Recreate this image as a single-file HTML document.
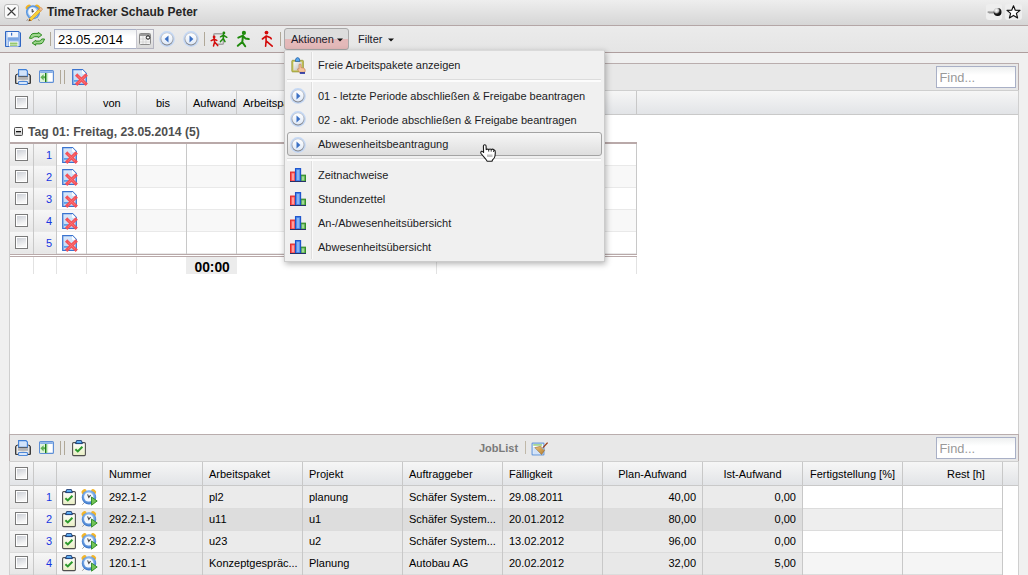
<!DOCTYPE html>
<html><head><meta charset="utf-8">
<style>
*{box-sizing:border-box;margin:0;padding:0}
html,body{width:1028px;height:575px;overflow:hidden;background:#f0f0f0;font-family:"Liberation Sans",sans-serif;font-size:11px;color:#000}
.a{position:absolute}
svg.a{overflow:visible}
#title{left:0;top:0;width:1028px;height:26px;background:linear-gradient(#eeeeee,#d6d6d6);border-bottom:1px solid #b4a6a6}
#tb{left:0;top:26px;width:1028px;height:27px;background:linear-gradient(#ebebeb,#e5e5e5);border-bottom:1px solid #ae9e9e}
.pbox{left:9px;width:1010px;border:1px solid #cfcfcf;border-top-color:#b9adad;background:#fff}
.pbr{left:9px;width:1010px;height:27px;border:1px solid #b9adad;border-bottom:0}
.ptb{left:10px;width:1008px;height:27px;background:#e8e8e8;border-bottom:1px solid #cfcfcf}
.hdr{left:10px;width:1008px;height:24px;background:linear-gradient(#f6f6f6,#e2e4e7);border-bottom:1px solid #c9c9c9}
.vl{width:1px;background:#c8c8c8}
.hl{height:1px;background:#e6e6e6}
.t{white-space:nowrap}
.cb{width:13px;height:13px;border:1px solid #7a7a7a;box-shadow:inset 0 0 0 1px #fff;background:linear-gradient(160deg,#c6cad2,#f6f6f6 75%)}
.find{width:80px;height:22px;border:1px solid #a9b0c6;background:linear-gradient(#eef0f0,#fff 40%);color:#999;padding:3px 0 0 2.5px;font-size:12.8px}
.num{color:#1636e2;text-align:right;width:20px}
.sep{width:1px;background:#b0a898}
.gcell{background:linear-gradient(#f7f7f7,#e7e7e7)}
</style></head><body>
<svg width="0" height="0" style="position:absolute">
 <defs>
  <linearGradient id="gBlue" x1="0" y1="0" x2="0" y2="1"><stop offset="0" stop-color="#d8e8fb"/><stop offset="1" stop-color="#9cc0ee"/></linearGradient>
 <linearGradient id="gPrn" x1="0" y1="0" x2="1" y2="0"><stop offset="0" stop-color="#8a8a8a"/><stop offset=".15" stop-color="#fafafa"/><stop offset=".5" stop-color="#d6d6d6"/><stop offset=".85" stop-color="#f4f4f4"/><stop offset="1" stop-color="#6a6a6a"/></linearGradient>
<linearGradient id="gExp" x1="0" y1="0" x2="1" y2="0"><stop offset="0" stop-color="#2a8a22"/><stop offset=".3" stop-color="#8fcf86"/><stop offset="1" stop-color="#fff" stop-opacity="0"/></linearGradient>
<linearGradient id="gRing" x1="0" y1="0" x2="0" y2="1"><stop offset="0" stop-color="#c9cfd8"/><stop offset="1" stop-color="#7d7f85"/></linearGradient>
<linearGradient id="gFace" x1="0" y1="0" x2="0" y2="1"><stop offset="0" stop-color="#ffffff"/><stop offset="1" stop-color="#dfe9f7"/></linearGradient>
<linearGradient id="gClip" x1="0" y1="0" x2="0" y2="1"><stop offset="0" stop-color="#ffffff"/><stop offset="1" stop-color="#e9efc4"/></linearGradient>
<linearGradient id="gClipT" x1="0" y1="0" x2="0" y2="1"><stop offset="0" stop-color="#8fd0ff"/><stop offset="1" stop-color="#2f8ee8"/></linearGradient>
<radialGradient id="gClk" cx=".5" cy=".4" r=".6"><stop offset=".5" stop-color="#8ab8ee"/><stop offset="1" stop-color="#2f6cc4"/></radialGradient>
</defs>
</svg>
<!-- ============ title bar ============ -->
<div id="title" class="a"></div>
<div class="a" style="left:4px;top:4px;width:15px;height:15px;border:1px solid #b9b9b9;border-radius:3px;background:#fafafa"></div>
<svg class="a" style="left:7px;top:7px" width="9" height="9"><path d="M0.5 0.5L8.5 8.5M8.5 0.5L0.5 8.5" stroke="#3a3a3a" stroke-width="1.1"/></svg>
<svg class="a" style="left:25px;top:4px" width="17" height="17" viewBox="0 0 17 17">
 <ellipse cx="3.3" cy="3" rx="3" ry="2" transform="rotate(-40 3.3 3)" fill="#f2b320"/>
 <ellipse cx="12.7" cy="3" rx="3" ry="2" transform="rotate(40 12.7 3)" fill="#f2b320"/>
 <path d="M3 15.5L1.5 16.5M13 15.5L14.5 16.5" stroke="#777" stroke-width=".8"/>
 <circle cx="8" cy="8.3" r="7" fill="#5b98e0"/><circle cx="8" cy="8.3" r="5.6" fill="#9cc4ef"/><circle cx="7.6" cy="7.8" r="4.4" fill="#f2f6fb"/>
 <path d="M7.2 5V8.2L9 6.8" fill="none" stroke="#333" stroke-width="1"/>
 <path d="M4.2 14.8L13.8 5.2L15.8 7.2L6.2 16.8Z" fill="#f6d23a" stroke="#d88a1a" stroke-width=".6"/>
 <path d="M13.8 5.2L15.4 3.6Q16.4 3.6 17 4.2Q17.4 5 17.4 5.6L15.8 7.2Z" fill="#efc09a" stroke="#c98040" stroke-width=".5"/>
 <path d="M4.2 14.8L3.4 17.2L6.2 16.8Z" fill="#7a4a1a"/>
</svg>
<div class="a t" style="left:47px;top:5px;font-weight:bold;font-size:12px;color:#262626">TimeTracker Schaub Peter</div>
<div class="a" style="left:986px;top:4px;width:16px;height:16px;border-radius:3px;background:#eeeeee"></div>
<svg class="a" style="left:986px;top:4px" width="16" height="16" viewBox="0 0 16 16">
 <radialGradient id="gPin" cx=".35" cy=".3" r=".75"><stop offset="0" stop-color="#fff"/><stop offset=".35" stop-color="#d0d0d0"/><stop offset=".6" stop-color="#222"/><stop offset="1" stop-color="#000"/></radialGradient>
 <path d="M1 8L3.2 6.9H9V9.4H3.2Z" fill="#9a9a9a"/><path d="M3.2 6.9H9V7.8H3.2Z" fill="#c8c8c8"/>
 <circle cx="11.6" cy="8" r="3.9" fill="url(#gPin)"/>
</svg>
<div class="a" style="left:1005px;top:4px;width:17px;height:16px;border-radius:3px;background:#eeeeee"></div>
<svg class="a" style="left:1006px;top:5px" width="15" height="14" viewBox="0 0 15 14">
 <path d="M7.5 0.8L9.3 5.2L14 5.4L10.4 8.4L11.6 13L7.5 10.4L3.4 13L4.6 8.4L1 5.4L5.7 5.2Z" fill="#fff" stroke="#111" stroke-width="1.15" stroke-linejoin="round"/>
</svg>
<!-- ============ toolbar ============ -->
<div id="tb" class="a"></div>
<svg class="a" style="left:5px;top:31px" width="16" height="16" viewBox="0 0 16 16">
 <path d="M0.5 0.5H14L15.5 2V15.5H0.5Z" fill="#8fb3ea" stroke="#2f66c2"/>
 <rect x="1.5" y="1" width="1.2" height="14" fill="#d8e6f8"/>
 <rect x="2.7" y="1" width="10.3" height="5.5" fill="#f2f6fc"/>
 <rect x="6" y="1.8" width="1.2" height="2.8" fill="#3a6fc8"/>
 <rect x="2.7" y="6.5" width="11" height="2.5" fill="#7aa4e2"/>
 <rect x="4" y="10.5" width="9.5" height="5" fill="#fff"/>
 <rect x="5" y="11.6" width="7.5" height="1.2" fill="#7cba4c"/><rect x="5" y="13.5" width="7.5" height="1.2" fill="#7cba4c"/>
</svg>
<svg class="a" style="left:29px;top:32px" width="16" height="14" viewBox="0 0 16 14">
 <path d="M0.5 6.3L1.6 3.6Q2.6 1.4 5 1.4H9.3V0.4L12.8 3L9.3 5.7V4.7H5.8Q4.2 4.7 3.3 6.3Z" fill="#9dd58c" stroke="#2a8a1e" stroke-width="1" stroke-linejoin="round"/>
 <path d="M15.5 7L14.4 9.7Q13.4 11.9 11 11.9H6.7V13.4L3.2 11L6.7 8.3V9.1H10.2Q11.8 9.1 12.7 7Z" fill="#9dd58c" stroke="#2a8a1e" stroke-width="1" stroke-linejoin="round"/>
</svg>
<div class="a sep" style="left:50px;top:32px;height:14px"></div>
<div class="a" style="left:54px;top:29px;width:84px;height:20px;border:1px solid #a9b0c6;border-right:0;background:linear-gradient(#eef0f2,#fff 35%)"></div>
<div class="a t" style="left:58px;top:32px;font-size:13px;color:#000">23.05.2014</div>
<div class="a" style="left:136px;top:29px;width:18px;height:20px;border:1px solid #b4b4c0;border-left:1px solid #c8c8d0;background:linear-gradient(#f6f6f6,#d9d9d9)"></div>
<svg class="a" style="left:139px;top:33px" width="12" height="12" viewBox="0 0 12 12">
 <rect x="0.5" y="0.5" width="11" height="11" rx="1" fill="#f3f3f3" stroke="#8a8a8a"/>
 <rect x="1" y="1" width="10" height="2" fill="#9a9a9a"/>
 <path d="M4 3V11M7 3V11M1 6H11M1 9H11" stroke="#cfcfcf" stroke-width=".8"/>
 <circle cx="9" cy="4.5" r="1.7" fill="#fff" stroke="#111" stroke-width="1"/>
</svg>
<svg class="a" style="left:159px;top:31px" width="16" height="16" viewBox="0 0 16 16"><g transform="translate(16,0) scale(-1,1)"><circle cx="8" cy="8" r="7.9" fill="#c4d8f5"/>
   <circle cx="8" cy="8" r="6.5" fill="url(#gRing)"/>
   <circle cx="8" cy="7.8" r="5.6" fill="url(#gFace)"/>
   <path d="M6.5 4.6L10.4 8L6.5 11.4Z" fill="#3b70c4"/></g></svg>
<svg class="a" style="left:183px;top:31px" width="16" height="16" viewBox="0 0 16 16"><circle cx="8" cy="8" r="7.9" fill="#c4d8f5"/>
   <circle cx="8" cy="8" r="6.5" fill="url(#gRing)"/>
   <circle cx="8" cy="7.8" r="5.6" fill="url(#gFace)"/>
   <path d="M6.5 4.6L10.4 8L6.5 11.4Z" fill="#3b70c4"/></svg>
<div class="a sep" style="left:204px;top:32px;height:14px"></div>
<svg class="a" style="left:210px;top:31px" width="18" height="16" viewBox="0 0 18 16">
 <rect x="3.8" y="2.7" width="9.6" height="10.6" rx="1" fill="none" stroke="#a3a3a3" stroke-width="1.5"/>
 <path d="M1.5 7.5L5 14.5M2 14V15" stroke="#e8e8e8" stroke-width="3"/>
 <path d="M9 6V11" stroke="#e8e8e8" stroke-width="4"/>
 <circle cx="4.1" cy="5.9" r="1.4" fill="#d40c0c"/>
 <path d="M1.2 9.6L4.2 8.2L6.8 9.4M4.2 7.4L4.6 11L3.5 15M4.6 11L7.7 14.6" fill="none" stroke="#d40c0c" stroke-width="1.5" stroke-linecap="round" stroke-linejoin="round"/>
 <circle cx="13.9" cy="1.9" r="1.4" fill="#1f8a0c"/>
 <path d="M10.5 5.8L13.4 4.2L16.8 6.3M13.5 3.5L13.3 7.6L10.5 10.6M13.3 7.6L15 10.6" fill="none" stroke="#1f8a0c" stroke-width="1.5" stroke-linecap="round" stroke-linejoin="round"/>
</svg>
<svg class="a" style="left:236px;top:31px" width="14" height="16" viewBox="0 0 14 16">
 <circle cx="7.9" cy="1.9" r="2.1" fill="#1f8a0c"/>
 <path d="M2.3 6.6L7 4.6L6.3 11L1.8 14.8M6.3 11L9.2 15.3M7.2 5.2L9.4 7.4L12.8 8" fill="none" stroke="#1f8a0c" stroke-width="2" stroke-linecap="round" stroke-linejoin="round"/>
</svg>
<svg class="a" style="left:261px;top:31px" width="14" height="16" viewBox="0 0 14 16">
 <circle cx="5.5" cy="1.6" r="1.9" fill="#d30a0a"/>
 <path d="M1.4 8L5 5.2L5.1 9.8L4.6 15.2M5.1 9.8L11.2 15.2M5.3 5L9.5 6.8L10.2 7.8" fill="none" stroke="#d30a0a" stroke-width="1.6" stroke-linecap="round" stroke-linejoin="round"/>
</svg>
<div class="a sep" style="left:280px;top:32px;height:14px"></div>
<div class="a" style="left:284px;top:28px;width:65px;height:22px;border:1px solid #a9a9a9;border-radius:3px;background:linear-gradient(#dddddd 50%,#e4b9b9 50%)"></div>
<div class="a t" style="left:291px;top:33px;color:#1a1a2a">Aktionen</div>
<svg class="a" style="left:337px;top:38px" width="6" height="4"><path d="M0 0.5H6L3 3.5Z" fill="#111"/></svg>
<div class="a t" style="left:358px;top:33px;color:#1a1a2a">Filter</div>
<svg class="a" style="left:388px;top:38px" width="6" height="4"><path d="M0 0.5H6L3 3.5Z" fill="#111"/></svg>
<!-- ============ top panel ============ -->
<div class="a pbox" style="top:63px;height:372px"></div>
<div class="a ptb" style="top:64px"></div>
<div class="a pbr" style="top:63px"></div>
<svg class="a" style="left:15px;top:69px" width="16" height="16" viewBox="0 0 16 16"><path d="M0.6 7Q0.6 5.2 2.4 5.2H13.6Q15.4 5.2 15.4 7V14.4H0.6Z" fill="url(#gPrn)" stroke="#2e2e2e" stroke-width="1"/>
   <rect x="3" y="8.2" width="10" height="2.6" fill="#b4b4b4"/>
   <path d="M3.6 0.6H11L12.4 2V7.4H3.6Z" fill="#d3e4fa" stroke="#3f7fd6" stroke-width="1.1"/>
   <path d="M3.6 7.6H12.4" stroke="#5a5a5a" stroke-width="1"/>
   <path d="M3.6 12.6H12.4V15.4H3.6Z" fill="#eaf2fd" stroke="#3f7fd6" stroke-width="1"/></svg>
<svg class="a" style="left:39px;top:70px" width="15" height="13" viewBox="0 0 15 13"><rect x="0.6" y="0.6" width="13.8" height="11.8" rx="1" fill="#fff" stroke="#5e8fd6" stroke-width="1.2"/>
   <rect x="1.2" y="1.2" width="12.6" height="1.8" fill="#86aee8"/>
   <rect x="1.2" y="3" width="5.3" height="9" fill="#dff3da"/>
   <rect x="6.3" y="3" width="4" height="9" fill="url(#gExp)"/>
   <path d="M1.4 7.3L4.6 4.2V6.3H6V8.3H4.6V10.4Z" fill="#5fb055"/>
   <rect x="6" y="3" width="1.1" height="9" fill="#1f7a1a"/></svg>
<div class="a sep" style="left:60px;top:70px;height:14px"></div>
<div class="a sep" style="left:64px;top:70px;height:14px"></div>
<svg class="a" style="left:72px;top:69px" width="16" height="16" viewBox="0 0 16 16"><path d="M0.7 0.7H10.5L14.3 4.5V15.5H0.7Z" fill="url(#gBlue)" stroke="#3a73cf" stroke-width="1.2"/>
   <path d="M2 2H10V5H13V14H2Z" fill="#d9e8fa" opacity=".6"/>
   <path d="M10.5 1V4.5H14" fill="#fff" stroke="#fff" stroke-width=".8"/>
   <rect x="2" y="11" width="6" height="1.8" fill="#5aa0e8"/>
   <path d="M5.3 6.6L13.6 14.6M13.6 6.6L5.3 14.6" stroke="#f5535a" stroke-width="3.3" stroke-linecap="square"/>
   <path d="M6 7.3L13 14M13 7.3L6 14" stroke="#ff8a8a" stroke-width=".9" opacity=".6"/></svg>
<div class="a find" style="left:936px;top:66px">Find...</div>
<div class="a hdr" style="top:91px"></div>
<div class="a cb" style="left:15px;top:96px"></div>
<div class="a vl" style="left:33px;top:91px;height:23px"></div>
<div class="a vl" style="left:56px;top:91px;height:23px"></div>
<div class="a vl" style="left:86px;top:91px;height:23px"></div>
<div class="a vl" style="left:136px;top:91px;height:23px"></div>
<div class="a vl" style="left:186px;top:91px;height:23px"></div>
<div class="a vl" style="left:236px;top:91px;height:23px"></div>
<div class="a vl" style="left:436px;top:91px;height:23px"></div>
<div class="a vl" style="left:636px;top:91px;height:23px"></div>
<div class="a t" style="left:103px;top:97px">von</div>
<div class="a t" style="left:156px;top:97px">bis</div>
<div class="a t" style="left:193px;top:97px">Aufwand</div>
<div class="a t" style="left:243px;top:97px">Arbeitspaket</div>
<!-- group header -->
<svg class="a" style="left:14px;top:127px" width="9" height="9" viewBox="0 0 9 9"><linearGradient id="gMin" x1="0" y1="0" x2="0" y2="1"><stop offset="0" stop-color="#fafafa"/><stop offset="1" stop-color="#cfcfcf"/></linearGradient><rect x=".5" y=".5" width="8" height="8" rx="1" fill="url(#gMin)" stroke="#4a4a4a"/><rect x="2" y="4" width="5" height="1.3" fill="#111"/></svg>
<div class="a t" style="left:28px;top:125px;font-weight:bold;font-size:12.2px;color:#4f4f4f">Tag 01: Freitag, 23.05.2014 (5)</div>
<div class="a" style="left:10px;top:142px;width:627px;height:2px;background:#b9a9a9"></div>
<!--ROWS_TOP-->
<div class="a gcell" style="left:10px;top:144px;width:46px;height:21px"></div>
<div class="a cb" style="left:15px;top:148px"></div>
<div class="a t num" style="left:32px;top:149px;">1</div>
<svg class="a" style="left:62px;top:147px" width="16" height="16" viewBox="0 0 16 16"><path d="M0.7 0.7H10.5L14.3 4.5V15.5H0.7Z" fill="url(#gBlue)" stroke="#3a73cf" stroke-width="1.2"/>
   <path d="M2 2H10V5H13V14H2Z" fill="#d9e8fa" opacity=".6"/>
   <path d="M10.5 1V4.5H14" fill="#fff" stroke="#fff" stroke-width=".8"/>
   <rect x="2" y="11" width="6" height="1.8" fill="#5aa0e8"/>
   <path d="M5.3 6.6L13.6 14.6M13.6 6.6L5.3 14.6" stroke="#f5535a" stroke-width="3.3" stroke-linecap="square"/>
   <path d="M6 7.3L13 14M13 7.3L6 14" stroke="#ff8a8a" stroke-width=".9" opacity=".6"/></svg>
<div class="a hl" style="left:10px;top:165px;width:627px;background:#e9e9e9"></div>
<div class="a gcell" style="left:10px;top:166px;width:46px;height:21px"></div>
<div class="a" style="left:57px;top:166px;width:580px;height:21px;background:#f8f8f8"></div>
<div class="a cb" style="left:15px;top:170px"></div>
<div class="a t num" style="left:32px;top:171px;">2</div>
<svg class="a" style="left:62px;top:169px" width="16" height="16" viewBox="0 0 16 16"><path d="M0.7 0.7H10.5L14.3 4.5V15.5H0.7Z" fill="url(#gBlue)" stroke="#3a73cf" stroke-width="1.2"/>
   <path d="M2 2H10V5H13V14H2Z" fill="#d9e8fa" opacity=".6"/>
   <path d="M10.5 1V4.5H14" fill="#fff" stroke="#fff" stroke-width=".8"/>
   <rect x="2" y="11" width="6" height="1.8" fill="#5aa0e8"/>
   <path d="M5.3 6.6L13.6 14.6M13.6 6.6L5.3 14.6" stroke="#f5535a" stroke-width="3.3" stroke-linecap="square"/>
   <path d="M6 7.3L13 14M13 7.3L6 14" stroke="#ff8a8a" stroke-width=".9" opacity=".6"/></svg>
<div class="a hl" style="left:10px;top:187px;width:627px;background:#e9e9e9"></div>
<div class="a gcell" style="left:10px;top:188px;width:46px;height:21px"></div>
<div class="a cb" style="left:15px;top:192px"></div>
<div class="a t num" style="left:32px;top:193px;">3</div>
<svg class="a" style="left:62px;top:191px" width="16" height="16" viewBox="0 0 16 16"><path d="M0.7 0.7H10.5L14.3 4.5V15.5H0.7Z" fill="url(#gBlue)" stroke="#3a73cf" stroke-width="1.2"/>
   <path d="M2 2H10V5H13V14H2Z" fill="#d9e8fa" opacity=".6"/>
   <path d="M10.5 1V4.5H14" fill="#fff" stroke="#fff" stroke-width=".8"/>
   <rect x="2" y="11" width="6" height="1.8" fill="#5aa0e8"/>
   <path d="M5.3 6.6L13.6 14.6M13.6 6.6L5.3 14.6" stroke="#f5535a" stroke-width="3.3" stroke-linecap="square"/>
   <path d="M6 7.3L13 14M13 7.3L6 14" stroke="#ff8a8a" stroke-width=".9" opacity=".6"/></svg>
<div class="a hl" style="left:10px;top:209px;width:627px;background:#e9e9e9"></div>
<div class="a gcell" style="left:10px;top:210px;width:46px;height:21px"></div>
<div class="a" style="left:57px;top:210px;width:580px;height:21px;background:#f8f8f8"></div>
<div class="a cb" style="left:15px;top:214px"></div>
<div class="a t num" style="left:32px;top:215px;">4</div>
<svg class="a" style="left:62px;top:213px" width="16" height="16" viewBox="0 0 16 16"><path d="M0.7 0.7H10.5L14.3 4.5V15.5H0.7Z" fill="url(#gBlue)" stroke="#3a73cf" stroke-width="1.2"/>
   <path d="M2 2H10V5H13V14H2Z" fill="#d9e8fa" opacity=".6"/>
   <path d="M10.5 1V4.5H14" fill="#fff" stroke="#fff" stroke-width=".8"/>
   <rect x="2" y="11" width="6" height="1.8" fill="#5aa0e8"/>
   <path d="M5.3 6.6L13.6 14.6M13.6 6.6L5.3 14.6" stroke="#f5535a" stroke-width="3.3" stroke-linecap="square"/>
   <path d="M6 7.3L13 14M13 7.3L6 14" stroke="#ff8a8a" stroke-width=".9" opacity=".6"/></svg>
<div class="a hl" style="left:10px;top:231px;width:627px;background:#e9e9e9"></div>
<div class="a gcell" style="left:10px;top:232px;width:46px;height:21px"></div>
<div class="a cb" style="left:15px;top:236px"></div>
<div class="a t num" style="left:32px;top:237px;">5</div>
<svg class="a" style="left:62px;top:235px" width="16" height="16" viewBox="0 0 16 16"><path d="M0.7 0.7H10.5L14.3 4.5V15.5H0.7Z" fill="url(#gBlue)" stroke="#3a73cf" stroke-width="1.2"/>
   <path d="M2 2H10V5H13V14H2Z" fill="#d9e8fa" opacity=".6"/>
   <path d="M10.5 1V4.5H14" fill="#fff" stroke="#fff" stroke-width=".8"/>
   <rect x="2" y="11" width="6" height="1.8" fill="#5aa0e8"/>
   <path d="M5.3 6.6L13.6 14.6M13.6 6.6L5.3 14.6" stroke="#f5535a" stroke-width="3.3" stroke-linecap="square"/>
   <path d="M6 7.3L13 14M13 7.3L6 14" stroke="#ff8a8a" stroke-width=".9" opacity=".6"/></svg>
<div class="a hl" style="left:10px;top:253px;width:627px;background:#e9e9e9"></div>
<div class="a vl" style="left:33px;top:144px;height:110px"></div>
<div class="a vl" style="left:56px;top:144px;height:110px"></div>
<div class="a vl" style="left:86px;top:144px;height:110px"></div>
<div class="a vl" style="left:136px;top:144px;height:110px"></div>
<div class="a vl" style="left:186px;top:144px;height:110px"></div>
<div class="a vl" style="left:236px;top:144px;height:110px"></div>
<div class="a vl" style="left:436px;top:144px;height:110px"></div>
<div class="a vl" style="left:636px;top:144px;height:110px"></div>
<div class="a" style="left:10px;top:254px;width:627px;height:1px;background:#b9a9a9"></div>
<div class="a" style="left:10px;top:256px;width:627px;height:1px;background:#b9a9a9"></div>
<div class="a" style="left:33px;top:257px;width:1px;height:17px;background:#e2e2e2"></div>
<div class="a" style="left:56px;top:257px;width:1px;height:17px;background:#e2e2e2"></div>
<div class="a" style="left:86px;top:257px;width:1px;height:17px;background:#e2e2e2"></div>
<div class="a" style="left:136px;top:257px;width:1px;height:17px;background:#e2e2e2"></div>
<div class="a" style="left:436px;top:257px;width:1px;height:17px;background:#e2e2e2"></div>
<div class="a" style="left:636px;top:257px;width:1px;height:17px;background:#e2e2e2"></div>
<div class="a" style="left:186px;top:257px;width:51px;height:17px;background:#ececec"></div>
<div class="a t" style="left:194.5px;top:260px;font-weight:bold;font-size:13.8px">00:00</div>
<!--/ROWS_TOP-->
<!--BOTTOM-->
<div class="a pbox" style="top:434px;height:150px"></div>
<div class="a ptb" style="top:435px"></div>
<div class="a pbr" style="top:434px"></div>
<svg class="a" style="left:15px;top:440px" width="16" height="16" viewBox="0 0 16 16"><path d="M0.6 7Q0.6 5.2 2.4 5.2H13.6Q15.4 5.2 15.4 7V14.4H0.6Z" fill="url(#gPrn)" stroke="#2e2e2e" stroke-width="1"/>
   <rect x="3" y="8.2" width="10" height="2.6" fill="#b4b4b4"/>
   <path d="M3.6 0.6H11L12.4 2V7.4H3.6Z" fill="#d3e4fa" stroke="#3f7fd6" stroke-width="1.1"/>
   <path d="M3.6 7.6H12.4" stroke="#5a5a5a" stroke-width="1"/>
   <path d="M3.6 12.6H12.4V15.4H3.6Z" fill="#eaf2fd" stroke="#3f7fd6" stroke-width="1"/></svg>
<svg class="a" style="left:39px;top:441px" width="15" height="13" viewBox="0 0 15 13"><rect x="0.6" y="0.6" width="13.8" height="11.8" rx="1" fill="#fff" stroke="#5e8fd6" stroke-width="1.2"/>
   <rect x="1.2" y="1.2" width="12.6" height="1.8" fill="#86aee8"/>
   <rect x="1.2" y="3" width="5.3" height="9" fill="#dff3da"/>
   <rect x="6.3" y="3" width="4" height="9" fill="url(#gExp)"/>
   <path d="M1.4 7.3L4.6 4.2V6.3H6V8.3H4.6V10.4Z" fill="#5fb055"/>
   <rect x="6" y="3" width="1.1" height="9" fill="#1f7a1a"/></svg>
<div class="a sep" style="left:60px;top:441px;height:14px"></div>
<div class="a sep" style="left:64px;top:441px;height:14px"></div>
<svg class="a" style="left:71px;top:440px" width="16" height="16" viewBox="0 0 16 16"><rect x="1.6" y="2.6" width="12.8" height="13" rx="1" fill="url(#gClip)" stroke="#505050" stroke-width="1.1"/>
   <path d="M4.6 3.6L5.6 0.6H10.4L11.4 3.6Z" fill="url(#gClipT)" stroke="#12306a" stroke-width=".9" stroke-linejoin="round"/>
   <path d="M4.4 9.2L6.8 11.4L11.4 6.8" fill="none" stroke="#2c9a2c" stroke-width="2"/></svg>
<div class="a t" style="left:479px;top:442px;font-weight:bold;font-size:11px;color:#7a7a7a">JobList</div>
<div class="a sep" style="left:525px;top:441px;height:13px;background:#c0b8a8"></div>
<svg class="a" style="left:531px;top:441px" width="18" height="16" viewBox="0 0 18 16">
 <linearGradient id="gBroom" x1="0" y1="0" x2="1" y2="1"><stop offset="0" stop-color="#f0c878"/><stop offset="1" stop-color="#b07a30"/></linearGradient>
 <rect x="1.1" y="2.1" width="11.8" height="11.8" rx=".6" fill="#fff" stroke="#6a9bdc" stroke-width="1.2"/>
 <rect x="2.2" y="3.4" width="9" height="1.1" fill="#6cbc50"/>
 <rect x="2.2" y="6" width="9.6" height="7.2" fill="#d2e2f7"/>
 <path d="M3.8 6.6L9.6 5.2L13.6 9.2L10.6 13.6Z" fill="url(#gBroom)" stroke="#8a5a20" stroke-width=".5"/>
 <path d="M10.2 5.8L13 8.6" stroke="#a8b8d8" stroke-width="1"/>
 <path d="M12 6.6L16.6 1.6" stroke="#9a3a14" stroke-width="1.3"/>
</svg>
<div class="a find" style="left:936px;top:437px">Find...</div>
<div class="a hdr" style="top:462px"></div>
<div class="a cb" style="left:15px;top:467px"></div>
<div class="a vl" style="left:33px;top:462px;height:23px"></div>
<div class="a vl" style="left:56px;top:462px;height:23px"></div>
<div class="a vl" style="left:102px;top:462px;height:23px"></div>
<div class="a vl" style="left:202px;top:462px;height:23px"></div>
<div class="a vl" style="left:302px;top:462px;height:23px"></div>
<div class="a vl" style="left:402px;top:462px;height:23px"></div>
<div class="a vl" style="left:502px;top:462px;height:23px"></div>
<div class="a vl" style="left:602px;top:462px;height:23px"></div>
<div class="a vl" style="left:702px;top:462px;height:23px"></div>
<div class="a vl" style="left:802px;top:462px;height:23px"></div>
<div class="a vl" style="left:902px;top:462px;height:23px"></div>
<div class="a vl" style="left:1002px;top:462px;height:23px"></div>
<div class="a t" style="left:109px;top:468px">Nummer</div>
<div class="a t" style="left:209px;top:468px">Arbeitspaket</div>
<div class="a t" style="left:309px;top:468px">Projekt</div>
<div class="a t" style="left:409px;top:468px">Auftraggeber</div>
<div class="a t" style="left:509px;top:468px">Fälligkeit</div>
<div class="a t" style="left:603px;top:468px;width:99px;text-align:center">Plan-Aufwand</div>
<div class="a t" style="left:703px;top:468px;width:99px;text-align:center">Ist-Aufwand</div>
<div class="a t" style="left:803px;top:468px;width:99px;text-align:center">Fertigstellung [%]</div>
<div class="a t" style="left:947px;top:468px">Rest [h]</div>
<div class="a gcell" style="left:10px;top:486px;width:46px;height:22px"></div>
<div class="a" style="left:57px;top:486px;width:45px;height:22px;background:#ffffff"></div>
<div class="a" style="left:103px;top:486px;width:699px;height:22px;background:#ebebeb"></div>
<div class="a" style="left:803px;top:486px;width:199px;height:22px;background:#ffffff"></div>
<div class="a cb" style="left:15px;top:490px"></div>
<div class="a t num" style="left:32px;top:491px;">1</div>
<svg class="a" style="left:61px;top:489px" width="16" height="16" viewBox="0 0 16 16"><rect x="1.6" y="2.6" width="12.8" height="13" rx="1" fill="url(#gClip)" stroke="#505050" stroke-width="1.1"/>
   <path d="M4.6 3.6L5.6 0.6H10.4L11.4 3.6Z" fill="url(#gClipT)" stroke="#12306a" stroke-width=".9" stroke-linejoin="round"/>
   <path d="M4.4 9.2L6.8 11.4L11.4 6.8" fill="none" stroke="#2c9a2c" stroke-width="2"/></svg>
<svg class="a" style="left:80px;top:488px" width="18" height="18" viewBox="0 0 18 18"><ellipse cx="4" cy="3.6" rx="2.9" ry="2" transform="rotate(-42 4 3.6)" fill="#f2b52a"/>
   <ellipse cx="13.6" cy="3.6" rx="2.9" ry="2" transform="rotate(42 13.6 3.6)" fill="#f2b52a"/>
   <path d="M3.8 15.2L2.4 16.6" stroke="#8a8a8a" stroke-width="1"/>
   <circle cx="9" cy="9.4" r="7.2" fill="url(#gClk)"/>
   <circle cx="8.7" cy="9" r="4.6" fill="#f4f8fd"/>
   <path d="M7.6 6.4L8.8 9.4L10.6 7.2" fill="none" stroke="#4a4a4a" stroke-width="1.1"/>
   <path d="M11.5 9L17.2 13L11.5 17.2Z" fill="#72c458" stroke="#2f8a22" stroke-width=".9" stroke-linejoin="round"/></svg>
<div class="a t" style="left:109px;top:491px">292.1-2</div>
<div class="a t" style="left:209px;top:491px">pl2</div>
<div class="a t" style="left:309px;top:491px">planung</div>
<div class="a t" style="left:409px;top:491px">Schäfer System...</div>
<div class="a t" style="left:509px;top:491px">29.08.2011</div>
<div class="a t" style="left:603px;top:491px;width:93px;text-align:right">40,00</div>
<div class="a t" style="left:703px;top:491px;width:93px;text-align:right">0,00</div>
<div class="a gcell" style="left:10px;top:508px;width:46px;height:22px"></div>
<div class="a" style="left:57px;top:508px;width:45px;height:22px;background:#eeeeee"></div>
<div class="a" style="left:103px;top:508px;width:699px;height:22px;background:#dddddd"></div>
<div class="a" style="left:803px;top:508px;width:199px;height:22px;background:#eeeeee"></div>
<div class="a cb" style="left:15px;top:512px"></div>
<div class="a t num" style="left:32px;top:513px;">2</div>
<svg class="a" style="left:61px;top:511px" width="16" height="16" viewBox="0 0 16 16"><rect x="1.6" y="2.6" width="12.8" height="13" rx="1" fill="url(#gClip)" stroke="#505050" stroke-width="1.1"/>
   <path d="M4.6 3.6L5.6 0.6H10.4L11.4 3.6Z" fill="url(#gClipT)" stroke="#12306a" stroke-width=".9" stroke-linejoin="round"/>
   <path d="M4.4 9.2L6.8 11.4L11.4 6.8" fill="none" stroke="#2c9a2c" stroke-width="2"/></svg>
<svg class="a" style="left:80px;top:510px" width="18" height="18" viewBox="0 0 18 18"><ellipse cx="4" cy="3.6" rx="2.9" ry="2" transform="rotate(-42 4 3.6)" fill="#f2b52a"/>
   <ellipse cx="13.6" cy="3.6" rx="2.9" ry="2" transform="rotate(42 13.6 3.6)" fill="#f2b52a"/>
   <path d="M3.8 15.2L2.4 16.6" stroke="#8a8a8a" stroke-width="1"/>
   <circle cx="9" cy="9.4" r="7.2" fill="url(#gClk)"/>
   <circle cx="8.7" cy="9" r="4.6" fill="#f4f8fd"/>
   <path d="M7.6 6.4L8.8 9.4L10.6 7.2" fill="none" stroke="#4a4a4a" stroke-width="1.1"/>
   <path d="M11.5 9L17.2 13L11.5 17.2Z" fill="#72c458" stroke="#2f8a22" stroke-width=".9" stroke-linejoin="round"/></svg>
<div class="a t" style="left:109px;top:513px">292.2.1-1</div>
<div class="a t" style="left:209px;top:513px">u11</div>
<div class="a t" style="left:309px;top:513px">u1</div>
<div class="a t" style="left:409px;top:513px">Schäfer System...</div>
<div class="a t" style="left:509px;top:513px">20.01.2012</div>
<div class="a t" style="left:603px;top:513px;width:93px;text-align:right">80,00</div>
<div class="a t" style="left:703px;top:513px;width:93px;text-align:right">0,00</div>
<div class="a gcell" style="left:10px;top:530px;width:46px;height:22px"></div>
<div class="a" style="left:57px;top:530px;width:45px;height:22px;background:#ffffff"></div>
<div class="a" style="left:103px;top:530px;width:699px;height:22px;background:#ebebeb"></div>
<div class="a" style="left:803px;top:530px;width:199px;height:22px;background:#ffffff"></div>
<div class="a cb" style="left:15px;top:534px"></div>
<div class="a t num" style="left:32px;top:535px;">3</div>
<svg class="a" style="left:61px;top:533px" width="16" height="16" viewBox="0 0 16 16"><rect x="1.6" y="2.6" width="12.8" height="13" rx="1" fill="url(#gClip)" stroke="#505050" stroke-width="1.1"/>
   <path d="M4.6 3.6L5.6 0.6H10.4L11.4 3.6Z" fill="url(#gClipT)" stroke="#12306a" stroke-width=".9" stroke-linejoin="round"/>
   <path d="M4.4 9.2L6.8 11.4L11.4 6.8" fill="none" stroke="#2c9a2c" stroke-width="2"/></svg>
<svg class="a" style="left:80px;top:532px" width="18" height="18" viewBox="0 0 18 18"><ellipse cx="4" cy="3.6" rx="2.9" ry="2" transform="rotate(-42 4 3.6)" fill="#f2b52a"/>
   <ellipse cx="13.6" cy="3.6" rx="2.9" ry="2" transform="rotate(42 13.6 3.6)" fill="#f2b52a"/>
   <path d="M3.8 15.2L2.4 16.6" stroke="#8a8a8a" stroke-width="1"/>
   <circle cx="9" cy="9.4" r="7.2" fill="url(#gClk)"/>
   <circle cx="8.7" cy="9" r="4.6" fill="#f4f8fd"/>
   <path d="M7.6 6.4L8.8 9.4L10.6 7.2" fill="none" stroke="#4a4a4a" stroke-width="1.1"/>
   <path d="M11.5 9L17.2 13L11.5 17.2Z" fill="#72c458" stroke="#2f8a22" stroke-width=".9" stroke-linejoin="round"/></svg>
<div class="a t" style="left:109px;top:535px">292.2.2-3</div>
<div class="a t" style="left:209px;top:535px">u23</div>
<div class="a t" style="left:309px;top:535px">u2</div>
<div class="a t" style="left:409px;top:535px">Schäfer System...</div>
<div class="a t" style="left:509px;top:535px">13.02.2012</div>
<div class="a t" style="left:603px;top:535px;width:93px;text-align:right">96,00</div>
<div class="a t" style="left:703px;top:535px;width:93px;text-align:right">0,00</div>
<div class="a gcell" style="left:10px;top:552px;width:46px;height:22px"></div>
<div class="a" style="left:57px;top:552px;width:45px;height:22px;background:#f5f5f5"></div>
<div class="a" style="left:103px;top:552px;width:699px;height:22px;background:#e8e8e8"></div>
<div class="a" style="left:803px;top:552px;width:199px;height:22px;background:#f5f5f5"></div>
<div class="a cb" style="left:15px;top:556px"></div>
<div class="a t num" style="left:32px;top:557px;">4</div>
<svg class="a" style="left:61px;top:555px" width="16" height="16" viewBox="0 0 16 16"><rect x="1.6" y="2.6" width="12.8" height="13" rx="1" fill="url(#gClip)" stroke="#505050" stroke-width="1.1"/>
   <path d="M4.6 3.6L5.6 0.6H10.4L11.4 3.6Z" fill="url(#gClipT)" stroke="#12306a" stroke-width=".9" stroke-linejoin="round"/>
   <path d="M4.4 9.2L6.8 11.4L11.4 6.8" fill="none" stroke="#2c9a2c" stroke-width="2"/></svg>
<svg class="a" style="left:80px;top:554px" width="18" height="18" viewBox="0 0 18 18"><ellipse cx="4" cy="3.6" rx="2.9" ry="2" transform="rotate(-42 4 3.6)" fill="#f2b52a"/>
   <ellipse cx="13.6" cy="3.6" rx="2.9" ry="2" transform="rotate(42 13.6 3.6)" fill="#f2b52a"/>
   <path d="M3.8 15.2L2.4 16.6" stroke="#8a8a8a" stroke-width="1"/>
   <circle cx="9" cy="9.4" r="7.2" fill="url(#gClk)"/>
   <circle cx="8.7" cy="9" r="4.6" fill="#f4f8fd"/>
   <path d="M7.6 6.4L8.8 9.4L10.6 7.2" fill="none" stroke="#4a4a4a" stroke-width="1.1"/>
   <path d="M11.5 9L17.2 13L11.5 17.2Z" fill="#72c458" stroke="#2f8a22" stroke-width=".9" stroke-linejoin="round"/></svg>
<div class="a t" style="left:109px;top:557px">120.1-1</div>
<div class="a t" style="left:209px;top:557px">Konzeptgespräc...</div>
<div class="a t" style="left:309px;top:557px">Planung</div>
<div class="a t" style="left:409px;top:557px">Autobau AG</div>
<div class="a t" style="left:509px;top:557px">20.02.2012</div>
<div class="a t" style="left:603px;top:557px;width:93px;text-align:right">32,00</div>
<div class="a t" style="left:703px;top:557px;width:93px;text-align:right">5,00</div>
<div class="a hl" style="left:10px;top:508px;width:992px;background:#dcdcdc"></div>
<div class="a hl" style="left:10px;top:530px;width:992px;background:#dcdcdc"></div>
<div class="a hl" style="left:10px;top:552px;width:992px;background:#dcdcdc"></div>
<div class="a hl" style="left:10px;top:574px;width:992px;background:#dcdcdc"></div>
<div class="a vl" style="left:33px;top:486px;height:90px"></div>
<div class="a vl" style="left:56px;top:486px;height:90px"></div>
<div class="a vl" style="left:102px;top:486px;height:90px"></div>
<div class="a vl" style="left:202px;top:486px;height:90px"></div>
<div class="a vl" style="left:302px;top:486px;height:90px"></div>
<div class="a vl" style="left:402px;top:486px;height:90px"></div>
<div class="a vl" style="left:502px;top:486px;height:90px"></div>
<div class="a vl" style="left:602px;top:486px;height:90px"></div>
<div class="a vl" style="left:702px;top:486px;height:90px"></div>
<div class="a vl" style="left:802px;top:486px;height:90px"></div>
<div class="a vl" style="left:902px;top:486px;height:90px"></div>
<div class="a vl" style="left:1002px;top:486px;height:90px"></div>
<!--/BOTTOM-->
<!--MENU-->
<div class="a" style="left:284px;top:50px;width:321px;height:212px;background:#f0f0f0;border:1px solid #cbcbcb;border-top-color:#dadada;box-shadow:1px 2px 6px rgba(0,0,0,.3)"></div>
<div class="a" style="left:311px;top:52px;width:1px;height:207px;background:#dedede"></div>
<div class="a" style="left:312px;top:52px;width:1px;height:207px;background:#fafafa"></div>
<div class="a" style="left:287px;top:79px;width:314px;height:1px;background:#dcdcdc"></div>
<div class="a" style="left:287px;top:80px;width:314px;height:2px;background:#fcfcfc"></div>
<div class="a" style="left:287px;top:158px;width:314px;height:1px;background:#dcdcdc"></div>
<div class="a" style="left:287px;top:159px;width:314px;height:2px;background:#fcfcfc"></div>
<div class="a" style="left:287px;top:132px;width:315px;height:24px;border:1px solid #a3a3a3;border-radius:3px;background:linear-gradient(#f6f6f6,#dedede)"></div>
<svg class="a" style="left:291px;top:57px" width="15" height="17" viewBox="0 0 15 17">
 <linearGradient id="gDoc1" x1="0" y1="0" x2="1" y2="1"><stop offset="0" stop-color="#fafafa"/><stop offset="1" stop-color="#b8b8b8"/></linearGradient>
 <rect x="0.8" y="3.3" width="11.6" height="11.6" rx=".8" fill="#c4c454" stroke="#8e8e30" stroke-width=".7"/>
 <rect x="2.4" y="4.8" width="8.4" height="8.6" fill="url(#gDoc1)"/>
 <path d="M4.3 4.5Q4.3 0.6 6.6 0.6Q8.9 0.6 8.9 4.5Z" fill="#55a6f0" stroke="#2a5a9a" stroke-width=".7"/>
 <path d="M8 8Q8 7 9 7Q10 7 10 8V10.6L12.6 11.1Q14.5 11.6 14.2 13.8L13.8 15.3H8.6L6.6 12.7Q6.1 11.8 7 11.6L8 12.2Z" fill="#f5c49c" stroke="#c07a48" stroke-width=".6"/>
 <rect x="8.8" y="15.2" width="5.2" height="1.6" fill="#1a2aa0"/>
</svg>
<div class="a t" style="left:318px;top:59px;color:#1c1c24">Freie Arbeitspakete anzeigen</div>
<div class="a t" style="left:318px;top:90px;color:#1c1c24">01 - letzte Periode abschließen &amp; Freigabe beantragen</div>
<div class="a t" style="left:318px;top:114px;color:#1c1c24">02 - akt. Periode abschließen &amp; Freigabe beantragen</div>
<div class="a t" style="left:318px;top:138px;color:#1c1c24">Abwesenheitsbeantragung</div>
<div class="a t" style="left:318px;top:169px;color:#1c1c24">Zeitnachweise</div>
<div class="a t" style="left:318px;top:193px;color:#1c1c24">Stundenzettel</div>
<div class="a t" style="left:318px;top:217px;color:#1c1c24">An-/Abwesenheitsübersicht</div>
<div class="a t" style="left:318px;top:241px;color:#1c1c24">Abwesenheitsübersicht</div>
<svg class="a" style="left:290px;top:88px" width="16" height="16" viewBox="0 0 16 16"><circle cx="8" cy="8" r="7.9" fill="#c4d8f5"/>
   <circle cx="8" cy="8" r="6.5" fill="url(#gRing)"/>
   <circle cx="8" cy="7.8" r="5.6" fill="url(#gFace)"/>
   <path d="M6.5 4.6L10.4 8L6.5 11.4Z" fill="#3b70c4"/></svg>
<svg class="a" style="left:290px;top:111px" width="16" height="16" viewBox="0 0 16 16"><circle cx="8" cy="8" r="7.9" fill="#c4d8f5"/>
   <circle cx="8" cy="8" r="6.5" fill="url(#gRing)"/>
   <circle cx="8" cy="7.8" r="5.6" fill="url(#gFace)"/>
   <path d="M6.5 4.6L10.4 8L6.5 11.4Z" fill="#3b70c4"/></svg>
<svg class="a" style="left:290px;top:137px" width="16" height="16" viewBox="0 0 16 16"><circle cx="8" cy="8" r="7.9" fill="#c4d8f5"/>
   <circle cx="8" cy="8" r="6.5" fill="url(#gRing)"/>
   <circle cx="8" cy="7.8" r="5.6" fill="url(#gFace)"/>
   <path d="M6.5 4.6L10.4 8L6.5 11.4Z" fill="#3b70c4"/></svg>
<svg class="a" style="left:290px;top:168px" width="16" height="14" viewBox="0 0 16 14"><rect x="0.6" y="4.1" width="4.8" height="9.3" fill="#ff5a5a" stroke="#e02828" stroke-width="1.1"/>
   <rect x="1.9" y="5.4" width="2.2" height="6.8" fill="#ff9c9c"/>
   <rect x="10.6" y="7.2" width="4.8" height="6.2" fill="#6cbc5c" stroke="#2d8a22" stroke-width="1.1"/>
   <rect x="11.9" y="8.5" width="2.2" height="3.8" fill="#a2d896"/>
   <rect x="5.5" y="0.6" width="5.1" height="12.8" fill="#4a88ea" stroke="#1a52cc" stroke-width="1.1"/>
   <rect x="6.8" y="1.9" width="2.5" height="10.2" fill="#86b3f3"/>
   <rect x="0" y="13" width="16" height="1" fill="#27306a"/></svg>
<svg class="a" style="left:290px;top:192px" width="16" height="14" viewBox="0 0 16 14"><rect x="0.6" y="4.1" width="4.8" height="9.3" fill="#ff5a5a" stroke="#e02828" stroke-width="1.1"/>
   <rect x="1.9" y="5.4" width="2.2" height="6.8" fill="#ff9c9c"/>
   <rect x="10.6" y="7.2" width="4.8" height="6.2" fill="#6cbc5c" stroke="#2d8a22" stroke-width="1.1"/>
   <rect x="11.9" y="8.5" width="2.2" height="3.8" fill="#a2d896"/>
   <rect x="5.5" y="0.6" width="5.1" height="12.8" fill="#4a88ea" stroke="#1a52cc" stroke-width="1.1"/>
   <rect x="6.8" y="1.9" width="2.5" height="10.2" fill="#86b3f3"/>
   <rect x="0" y="13" width="16" height="1" fill="#27306a"/></svg>
<svg class="a" style="left:290px;top:216px" width="16" height="14" viewBox="0 0 16 14"><rect x="0.6" y="4.1" width="4.8" height="9.3" fill="#ff5a5a" stroke="#e02828" stroke-width="1.1"/>
   <rect x="1.9" y="5.4" width="2.2" height="6.8" fill="#ff9c9c"/>
   <rect x="10.6" y="7.2" width="4.8" height="6.2" fill="#6cbc5c" stroke="#2d8a22" stroke-width="1.1"/>
   <rect x="11.9" y="8.5" width="2.2" height="3.8" fill="#a2d896"/>
   <rect x="5.5" y="0.6" width="5.1" height="12.8" fill="#4a88ea" stroke="#1a52cc" stroke-width="1.1"/>
   <rect x="6.8" y="1.9" width="2.5" height="10.2" fill="#86b3f3"/>
   <rect x="0" y="13" width="16" height="1" fill="#27306a"/></svg>
<svg class="a" style="left:290px;top:240px" width="16" height="14" viewBox="0 0 16 14"><rect x="0.6" y="4.1" width="4.8" height="9.3" fill="#ff5a5a" stroke="#e02828" stroke-width="1.1"/>
   <rect x="1.9" y="5.4" width="2.2" height="6.8" fill="#ff9c9c"/>
   <rect x="10.6" y="7.2" width="4.8" height="6.2" fill="#6cbc5c" stroke="#2d8a22" stroke-width="1.1"/>
   <rect x="11.9" y="8.5" width="2.2" height="3.8" fill="#a2d896"/>
   <rect x="5.5" y="0.6" width="5.1" height="12.8" fill="#4a88ea" stroke="#1a52cc" stroke-width="1.1"/>
   <rect x="6.8" y="1.9" width="2.5" height="10.2" fill="#86b3f3"/>
   <rect x="0" y="13" width="16" height="1" fill="#27306a"/></svg>
<svg class="a" style="left:480px;top:144px" width="17" height="18" viewBox="0 0 17 18">
 <path d="M3.6 8.5L3.4 2.2Q3.5 0.6 4.9 0.7Q6.2 0.9 6.1 2.4L6.2 5.6Q7.5 4.8 8.8 5.4Q10 4.7 11.3 5.4Q12.8 4.8 14 5.8Q15.6 6.5 15.3 9L15 12Q14.5 14.5 12.5 16L12 17.3H7.2L5.5 14.8L1 9.5Q0.2 8 1.5 7.3Q2.5 6.9 3.6 8.5Z" fill="#fff" stroke="#1a1a1a" stroke-width="1.1" stroke-linejoin="round"/>
 <path d="M8.7 5.8V7.6M11.2 5.8V7.6M13.6 6.3V8" stroke="#1a1a1a" stroke-width=".9"/>
 <rect x="7" y="10.5" width="5.5" height="2.5" fill="#9a9a9a" opacity=".6"/>
</svg>
<!--/MENU-->
</body></html>
